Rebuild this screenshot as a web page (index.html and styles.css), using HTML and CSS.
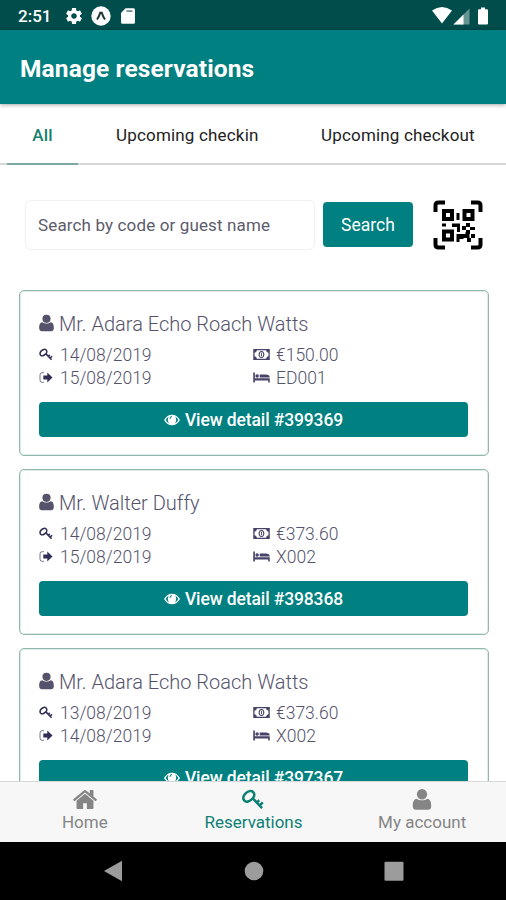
FILE: index.html
```html
<!DOCTYPE html>
<html lang="en">
<head>
<meta charset="utf-8">
<title>Manage reservations</title>
<link rel="stylesheet" href="styles.css">
</head>
<body>
<svg class="sprite" aria-hidden="true">
  <symbol id="user" viewBox="0 0 18 20"><circle cx="9" cy="5" r="4.9"/><path d="M4 9.200C1.200 9.400.2 12.500.2 16c0 2.400 1 3.800 3 3.800h11.600c2 0 3-1.400 3-3.800 0-3.500-1-6.600-3.800-6.800-2.500 2-7.500 2-10 0z"/></symbol>
  <symbol id="key" viewBox="0 0 24 22"><g fill="none" stroke="currentColor"><path d="M3 12.200C1.200 10 1.600 7.200 4 4.800 6.500 2.100 10.200 1.200 12.200 3.200c2 2 1.300 5-1 7.200-2.500 2.500-6.200 4-8.200 1.800z" stroke-width="2.600"/><path d="M11.500 9.500 21.500 20M16 14.200l2.500-2.500M19 17.200l3.300-3.300" stroke-width="2.600"/></g></symbol>
  <symbol id="out" viewBox="0 0 14 12"><path d="M5 1.200H3.200Q1 1.200 1 3.400v5.200q0 2.200 2.200 2.200H5" fill="none" stroke="currentColor" stroke-width="1" opacity=".65"/><path d="M4.300 4h4V1L13.500 6l-5.200 5V8h-4z"/></symbol>
  <symbol id="money" viewBox="0 0 18 12"><path fill-rule="evenodd" d="M0 0h18v12H0zM4 1.300Q3.700 3.600 1.400 4v4q2.300.4 2.600 2.700h10q.3-2.300 2.600-2.700V4Q14.300 3.600 14 1.300z"/><path fill-rule="evenodd" d="M9 2.200c4.200 0 4.200 7.600 0 7.600s-4.200-7.600 0-7.600zM9 3.200c-2.500 0-2.500 5.600 0 5.600s2.500-5.600 0-5.600z"/><path d="M8.500 4.200h1v3.600h-1z"/></symbol>
  <symbol id="bed" viewBox="0 0 18 12"><path d="M0 .5h1.800v6.200H18v4.800h-1.700V9.300H1.800v2.200H0z"/><circle cx="4.200" cy="4.400" r="1.900"/><path d="M7 2.600h6.500Q18 2.700 18 6H7z"/></symbol>
  <symbol id="eye" viewBox="0 0 18 13"><path fill-rule="evenodd" d="M0 6.500Q3.500.5 9 .5t9 6q-3.500 6-9 6t-9-6zM5.300 2.700Q3.200 4 1.800 6.500 3.300 9.200 5.500 10.300 3.200 6.500 5.300 2.700zM12.700 2.700q2.100 3.800-.2 7.600 2.200-1.100 3.700-3.800-1.400-2.500-3.500-3.800zM9 2.100Q6.300 2.300 6.100 5.300h1.100Q7.400 3.400 9 3.200z"/></symbol>
  <symbol id="home" viewBox="80 250 1632 1290"><path d="M1472 992v480q0 26-19 45t-45 19h-384v-384h-256v384h-384q-26 0-45-19t-19-45v-480q0-1 .5-3t.5-3l575-474 575 474q1 2 1 6zm223-69l-62 74q-8 9-21 11h-3q-13 0-21-7l-692-577-692 577q-12 8-24 7-13-2-21-11l-62-74q-8-10-7-23.500t11-21.500l719-599q32-26 76-26t76 26l244 204v-195q0-14 9-23t23-9h192q14 0 23 9t9 23v408l219 182q10 8 11 21.500t-7 23.500z"/></symbol>
</svg>
<div class="phone">
  <div class="status">
    <span class="time">2:51</span>
    <svg class="gear" viewBox="2 2 20 20"><path d="M19.430 12.980c.04-.32.07-.64.07-.98s-.03-.66-.07-.98l2.110-1.650c.19-.15.24-.42.12-.64l-2-3.460c-.12-.22-.39-.3-.61-.22l-2.490 1c-.52-.4-1.080-.73-1.690-.98l-.38-2.650C14.460 2.180 14.250 2 14 2h-4c-.25 0-.46.18-.49.42l-.38 2.650c-.61.25-1.170.59-1.690.98l-2.490-1c-.23-.09-.49 0-.61.22l-2 3.460c-.13.22-.07.49.12.64l2.110 1.650c-.04.32-.07.65-.07.98s.03.66.07.98l-2.110 1.650c-.19.15-.24.42-.12.64l2 3.460c.12.22.39.3.61.22l2.490-1c.52.4 1.080.73 1.690.98l.38 2.650c.03.24.24.42.49.42h4c.25 0 .46-.18.49-.42l.38-2.650c.61-.25 1.170-.59 1.690-.98l2.490 1c.23.09.49 0 .61-.22l2-3.460c.12-.22.07-.49-.12-.64l-2.110-1.650zM12 15.500c-1.930 0-3.500-1.570-3.500-3.500s1.570-3.500 3.500-3.500 3.500 1.570 3.500 3.500-1.570 3.500-3.500 3.500z"/></svg>
    <svg class="expo" viewBox="0 0 20 20"><circle cx="10" cy="10" r="9.700"/><path d="M6 13.500Q8 11 9.200 6.800h1.600q1.200 4.200 3.200 6.700" fill="none" stroke="#1d3534" stroke-width="2"/></svg>
    <svg class="sd" viewBox="0 0 14 16"><path fill-rule="evenodd" d="M4.500.3h8q1.500 0 1.500 1.500v12.500q0 1.500-1.500 1.500h-11Q0 15.800 0 14.300V5z"/><path d="M5.500 2.200h6v1.800h-6z" fill="#6b908e"/></svg>
    <svg class="signals" viewBox="0 0 58 18"><path d="M0 3.500Q10-3.500 20 3.500L10 16.500z"/><path d="M21.500 17.500 37.500 1.500v16z" opacity=".4"/><path d="M21.500 17.500 31.500 7.500v10z"/><path d="M46 3.200q0-1 1-1h2V.5h4v1.700h2q1 0 1 1v13.300q0 1-1 1h-8q-1 0-1-1z"/></svg>
  </div>
  <header class="header"><h1>Manage reservations</h1></header>
  <nav class="tabs">
    <span class="tab tab-active">All</span>
    <span class="tab tab-in">Upcoming checkin</span>
    <span class="tab tab-out">Upcoming checkout</span>
  </nav>
  <main class="content">
    <div class="search">
      <div class="field">Search by code or guest name</div>
      <div class="search-button">Search</div>
      <svg class="qr" viewBox="0 0 50 50">
        <path d="M2.500 12V5.500q0-3 3-3H12M38 2.500h6.500q3 0 3 3V12M47.500 38v6.500q0 3-3 3H38M12 47.500H5.500q-3 0-3-3V38" fill="none" stroke="#000" stroke-width="4"/>
        <path d="M11 11h8v8h-8zM31.500 11h8v8h-8zM11 31.500h8v8h-8z" fill="none" stroke="#000" stroke-width="4"/>
        <path d="M23.500 13h3v7h-3zM9 23.500h4v3H9zM19 23.500h8V32h-3v-5h-5zM33 23h4v4h-4zM29 26h4v4h-4zM37 27h5v3h-5zM33 30h4v4h-4zM23.500 34h9v-2h4v6h-6v1h-4v3h-3zM38 34h4v4h-4zM34 38h4v4h-4z"/>
      </svg>
    </div>
    <article class="card">
      <h2 class="guest"><svg><use href="#user"/></svg>Mr. Adara Echo Roach Watts</h2>
      <div class="facts">
        <span><svg class="k"><use href="#key"/></svg>14/08/2019</span><span><svg class="w"><use href="#money"/></svg><b>€150.00</b></span>
        <span><svg class="k"><use href="#out"/></svg>15/08/2019</span><span><svg class="w"><use href="#bed"/></svg><b>ED001</b></span>
      </div>
      <div class="detail"><svg><use href="#eye"/></svg>View detail #399369</div>
    </article>
    <article class="card">
      <h2 class="guest"><svg><use href="#user"/></svg>Mr. Walter Duffy</h2>
      <div class="facts">
        <span><svg class="k"><use href="#key"/></svg>14/08/2019</span><span><svg class="w"><use href="#money"/></svg><b>€373.60</b></span>
        <span><svg class="k"><use href="#out"/></svg>15/08/2019</span><span><svg class="w"><use href="#bed"/></svg><b>X002</b></span>
      </div>
      <div class="detail"><svg><use href="#eye"/></svg>View detail #398368</div>
    </article>
    <article class="card">
      <h2 class="guest"><svg><use href="#user"/></svg>Mr. Adara Echo Roach Watts</h2>
      <div class="facts">
        <span><svg class="k"><use href="#key"/></svg>13/08/2019</span><span><svg class="w"><use href="#money"/></svg><b>€373.60</b></span>
        <span><svg class="k"><use href="#out"/></svg>14/08/2019</span><span><svg class="w"><use href="#bed"/></svg><b>X002</b></span>
      </div>
      <div class="detail"><svg><use href="#eye"/></svg>View detail #397367</div>
    </article>
  </main>
  <nav class="bottom">
    <div class="item"><svg><use href="#home"/></svg><span>Home</span></div>
    <div class="item item-active"><svg><use href="#key"/></svg><span>Reservations</span></div>
    <div class="item"><svg><use href="#user"/></svg><span>My account</span></div>
  </nav>
  <div class="system">
    <svg viewBox="0 0 20 22"><path d="M0 11 18 .8v20.400z"/></svg>
    <svg viewBox="0 0 20 22"><circle cx="10" cy="11" r="9.300"/></svg>
    <svg viewBox="0 0 20 22"><rect x=".5" y="1.700" width="19" height="19" rx="1"/></svg>
  </div>
</div>
</body>
</html>
```
FILE: styles.css
```css
* { box-sizing: border-box; }
body { margin: 0; font-family: Roboto, sans-serif; background: #fff; }
svg { display: block; fill: currentColor; flex: none; }
.sprite { position: absolute; width: 0; height: 0; }
.phone { width: 506px; height: 900px; display: flex; flex-direction: column; overflow: hidden; }
.status { height: 30px; flex: none; background: #004d4b; color: #fff; display: flex; align-items: center; padding: 1px 16px 0 18px; }
.time { width: 48px; font-size: 17px; font-weight: 500; }
.gear { width: 16px; height: 16px; }
.expo { width: 20px; height: 20px; margin-left: 9px; }
.sd { width: 14px; height: 16px; margin-left: 10px; }
.signals { width: 58px; height: 18px; margin-left: auto; }
.header { height: 74px; flex: none; background: #008080; color: #fff; display: flex; align-items: center; padding: 3px 20px 0; box-shadow: 0 1px 4px rgba(0,0,0,.35); z-index: 1; }
h1 { margin: 0; font-size: 24.500px; font-weight: 700; letter-spacing: .12px; }
.tabs { height: 61px; flex: none; display: flex; border-bottom: 2px solid #d7d9d9; padding-left: 7px; font-size: 17px; letter-spacing: .18px; line-height: 62px; color: #222; }
.tab { white-space: nowrap; }
.tab-active { width: 71px; height: 61px; border-bottom: 2px solid #7eaaa4; text-align: center; color: #16806f; font-weight: 500; }
.tab-in { margin-left: 38px; width: 205px; }
.content { flex: 1; min-height: 0; overflow: hidden; padding: 34px 17px 0 19px; }
.search { display: flex; align-items: center; height: 52px; margin: 0 0 39px 6px; }
.field { width: 290px; height: 50px; border: 1px solid #f0f0f0; border-radius: 6px; padding-left: 12px; line-height: 48px; font-size: 17px; letter-spacing: .14px; color: #5c5b6b; white-space: nowrap; }
.search-button { width: 90px; height: 45px; margin: -2px 0 0 8px; border-radius: 4px; background: #008080; color: #fff; text-align: center; line-height: 46px; font-size: 17.500px; }
.qr { width: 50px; height: 50px; margin-left: 20px; margin-right: -1px; color: #000; }
.card { height: 166px; margin-bottom: 13px; border: 1px solid #8fb8ae; border-radius: 5px; padding: 21px 20px 0 19px; color: #55536c; box-shadow: inset 0 0 0 1px #e0ebe8; }
.guest { margin: 0; height: 23px; display: flex; align-items: center; font-size: 20px; font-weight: 300; letter-spacing: 0; }
.guest svg { width: 15px; height: 18px; margin-right: 5px; margin-top: -1px; }
.facts { margin-top: 8px; display: grid; grid-template-columns: 214px 1fr; grid-auto-rows: 23px; font-size: 17.500px; font-weight: 300; }
.facts span { display: flex; align-items: center; }
.facts b { font-weight: 300; }
.k { width: 14px; height: 13px; margin-right: 7px; color: #302e57; }
.w { width: 17px; height: 11px; margin-right: 6px; color: #454367; }
.detail { margin-top: 13px; height: 35px; border-radius: 4px; background: #008080; color: #fff; display: flex; align-items: center; justify-content: center; font-size: 17.500px; font-weight: 500; letter-spacing: -.12px; }
.detail svg { width: 16px; height: 12px; margin-right: 5px; }
.bottom { height: 61px; flex: none; background: #f7f7f7; border-top: 1px solid #d8d8d8; display: grid; grid-template-columns: repeat(3, 1fr); color: #858585; font-size: 17px; }
.item { display: flex; flex-direction: column; align-items: center; padding: 7px 0 0 1px; }
.item svg { width: 24px; height: 21px; }
.item span { margin-top: 2px; line-height: 20px; }
.item-active { color: #0d8075; }
.system { height: 58px; flex: none; background: #000; color: #9c9c9c; display: flex; gap: 120px; justify-content: center; align-items: center; padding-left: 1px; }
.system svg { width: 20px; height: 22px; }
```
